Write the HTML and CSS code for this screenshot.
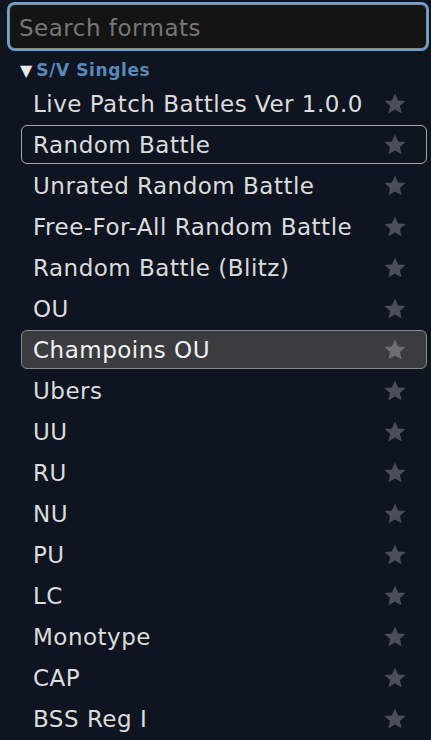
FILE: index.html
```html
<!DOCTYPE html>
<html>
<head>
<meta charset="utf-8">
<link rel="stylesheet" href="styles.css">
</head>
<body>
<div class="panel">
  <div class="search-wrap">
    <input class="search" type="text" placeholder="Search formats">
  </div>
  <div class="section">▼<span class="section-name">S/V Singles</span></div>
  <ul class="list">
    <li class="item"><span class="label">Live Patch Battles Ver 1.0.0</span><svg class="star" viewBox="0 0 24 24"><path d="M12 1.5l3.1 7 7.4.6-5.6 4.9 1.7 7.3L12 17.4l-6.6 3.9 1.7-7.3L1.5 9.1l7.4-.6z"/></svg></li>
    <li class="item outlined"><span class="label">Random Battle</span><svg class="star" viewBox="0 0 24 24"><path d="M12 1.5l3.1 7 7.4.6-5.6 4.9 1.7 7.3L12 17.4l-6.6 3.9 1.7-7.3L1.5 9.1l7.4-.6z"/></svg></li>
    <li class="item"><span class="label">Unrated Random Battle</span><svg class="star" viewBox="0 0 24 24"><path d="M12 1.5l3.1 7 7.4.6-5.6 4.9 1.7 7.3L12 17.4l-6.6 3.9 1.7-7.3L1.5 9.1l7.4-.6z"/></svg></li>
    <li class="item"><span class="label">Free-For-All Random Battle</span><svg class="star" viewBox="0 0 24 24"><path d="M12 1.5l3.1 7 7.4.6-5.6 4.9 1.7 7.3L12 17.4l-6.6 3.9 1.7-7.3L1.5 9.1l7.4-.6z"/></svg></li>
    <li class="item"><span class="label">Random Battle (Blitz)</span><svg class="star" viewBox="0 0 24 24"><path d="M12 1.5l3.1 7 7.4.6-5.6 4.9 1.7 7.3L12 17.4l-6.6 3.9 1.7-7.3L1.5 9.1l7.4-.6z"/></svg></li>
    <li class="item"><span class="label">OU</span><svg class="star" viewBox="0 0 24 24"><path d="M12 1.5l3.1 7 7.4.6-5.6 4.9 1.7 7.3L12 17.4l-6.6 3.9 1.7-7.3L1.5 9.1l7.4-.6z"/></svg></li>
    <li class="item active"><span class="label">Champoins OU</span><svg class="star" viewBox="0 0 24 24"><path d="M12 1.5l3.1 7 7.4.6-5.6 4.9 1.7 7.3L12 17.4l-6.6 3.9 1.7-7.3L1.5 9.1l7.4-.6z"/></svg></li>
    <li class="item"><span class="label">Ubers</span><svg class="star" viewBox="0 0 24 24"><path d="M12 1.5l3.1 7 7.4.6-5.6 4.9 1.7 7.3L12 17.4l-6.6 3.9 1.7-7.3L1.5 9.1l7.4-.6z"/></svg></li>
    <li class="item"><span class="label">UU</span><svg class="star" viewBox="0 0 24 24"><path d="M12 1.5l3.1 7 7.4.6-5.6 4.9 1.7 7.3L12 17.4l-6.6 3.9 1.7-7.3L1.5 9.1l7.4-.6z"/></svg></li>
    <li class="item"><span class="label">RU</span><svg class="star" viewBox="0 0 24 24"><path d="M12 1.5l3.1 7 7.4.6-5.6 4.9 1.7 7.3L12 17.4l-6.6 3.9 1.7-7.3L1.5 9.1l7.4-.6z"/></svg></li>
    <li class="item"><span class="label">NU</span><svg class="star" viewBox="0 0 24 24"><path d="M12 1.5l3.1 7 7.4.6-5.6 4.9 1.7 7.3L12 17.4l-6.6 3.9 1.7-7.3L1.5 9.1l7.4-.6z"/></svg></li>
    <li class="item"><span class="label">PU</span><svg class="star" viewBox="0 0 24 24"><path d="M12 1.5l3.1 7 7.4.6-5.6 4.9 1.7 7.3L12 17.4l-6.6 3.9 1.7-7.3L1.5 9.1l7.4-.6z"/></svg></li>
    <li class="item"><span class="label">LC</span><svg class="star" viewBox="0 0 24 24"><path d="M12 1.5l3.1 7 7.4.6-5.6 4.9 1.7 7.3L12 17.4l-6.6 3.9 1.7-7.3L1.5 9.1l7.4-.6z"/></svg></li>
    <li class="item"><span class="label">Monotype</span><svg class="star" viewBox="0 0 24 24"><path d="M12 1.5l3.1 7 7.4.6-5.6 4.9 1.7 7.3L12 17.4l-6.6 3.9 1.7-7.3L1.5 9.1l7.4-.6z"/></svg></li>
    <li class="item"><span class="label">CAP</span><svg class="star" viewBox="0 0 24 24"><path d="M12 1.5l3.1 7 7.4.6-5.6 4.9 1.7 7.3L12 17.4l-6.6 3.9 1.7-7.3L1.5 9.1l7.4-.6z"/></svg></li>
    <li class="item"><span class="label">BSS Reg I</span><svg class="star" viewBox="0 0 24 24"><path d="M12 1.5l3.1 7 7.4.6-5.6 4.9 1.7 7.3L12 17.4l-6.6 3.9 1.7-7.3L1.5 9.1l7.4-.6z"/></svg></li>
  </ul>
</div>
</body>
</html>
```
FILE: styles.css
```css
html, body {
  margin: 0;
  padding: 0;
  background: #0e1520;
  height: 100%;
  overflow: hidden;
}
.panel {
  font-family: "DejaVu Sans", Verdana, sans-serif;
  color: #dcdcdc;
}
.search-wrap {
  padding: 4px 4px 0 9px;
}
.search {
  box-sizing: border-box;
  width: 418px;
  height: 45px;
  margin: 0;
  border: 1px solid #8a8a8a;
  border-radius: 6px;
  box-shadow: 0 0 0 2px #6ba3d6;
  background: #141414;
  color: #ddd;
  font-family: "DejaVu Sans", Verdana, sans-serif;
  font-size: 23px;
  letter-spacing: 0.5px;
  padding: 2px 0 0 9px;
  outline: none;
  caret-color: #fff;
}
.search::placeholder {
  color: #777;
}
.section {
  margin: 10px 0 0 20px;
  height: 22px;
  line-height: 22px;
  font-size: 16px;
  color: #e8e8e8;
}
.section-name {
  font-weight: bold;
  color: #5a89b9;
  font-size: 17px;
  letter-spacing: 0.6px;
  margin-left: 4px;
}
.list {
  list-style: none;
  margin: 3px 0 0 0;
  padding: 0;
}
.item {
  box-sizing: border-box;
  display: flex;
  align-items: center;
  justify-content: space-between;
  height: 39px;
  margin: 0 4px 2px 21px;
  padding: 0 20px 0 11px;
  border: 1px solid transparent;
  border-radius: 6px;
  font-size: 23px;
  letter-spacing: 0.5px;
}
.label {
  white-space: nowrap;
}
.outlined {
  border-color: #a6a6a6;
}
.active {
  border-color: #8a8a8a;
  background: #3a3c40;
  color: #f2f2f2;
}
.star {
  width: 24px;
  height: 24px;
  margin-right: -1px;
  fill: #4a4f57;
  flex: none;
}
.active .star {
  fill: #6b6e73;
}
```
